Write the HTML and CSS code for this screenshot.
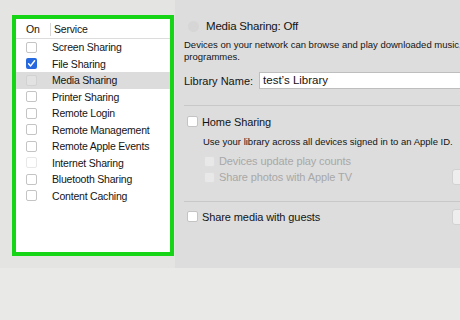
FILE: index.html
```html
<!DOCTYPE html>
<html>
	<head>
		<meta charset="utf-8" />
		<link rel="stylesheet" href="styles.css">
	</head>
	<body>
		<div class="top">
			<div class="left">
				<div class="list">
					<div class="list-head">
						<span class="col-on">On</span>
						<span class="col-service">Service</span>
					</div>
					<div class="row"><span class="box"></span><span>Screen Sharing</span></div>
					<div class="row"><span class="box checked"><svg width="11" height="11" viewBox="0 0 11 11"><path d="M2.6 5.8 L4.6 7.9 L8.6 2.8" fill="none" stroke="#fff" stroke-width="1.5" stroke-linecap="round" stroke-linejoin="round"/></svg></span><span>File Sharing</span></div>
					<div class="row selected"><span class="box faint"></span><span>Media Sharing</span></div>
					<div class="row"><span class="box"></span><span>Printer Sharing</span></div>
					<div class="row"><span class="box"></span><span>Remote Login</span></div>
					<div class="row"><span class="box"></span><span>Remote Management</span></div>
					<div class="row"><span class="box"></span><span>Remote Apple Events</span></div>
					<div class="row"><span class="box faint"></span><span>Internet Sharing</span></div>
					<div class="row"><span class="box"></span><span>Bluetooth Sharing</span></div>
					<div class="row"><span class="box"></span><span>Content Caching</span></div>
				</div>
			</div>
			<div class="panel">
				<div class="title"><span class="radio"></span><span>Media Sharing: Off</span></div>
				<div class="desc">Devices on your network can browse and play downloaded music, films and TV programmes.</div>
				<div class="lib">
					<span>Library Name:</span>
					<span class="input">test’s Library</span>
				</div>
				<div class="section">
					<div class="check-line"><span class="box"></span><span>Home Sharing</span></div>
					<div class="note">Use your library across all devices signed in to an Apple ID.</div>
					<div class="check-line sub disabled"><span class="box"></span><span>Devices update play counts</span></div>
					<div class="check-line sub disabled"><span class="box"></span><span>Share photos with Apple TV</span><span class="side-btn"></span></div>
				</div>
				<div class="section guests">
					<div class="check-line"><span class="box"></span><span>Share media with guests</span><span class="side-btn"></span></div>
				</div>
			</div>
		</div>
		<div class="bottom"></div>
	</body>
</html>
```

FILE: styles.css
```css
html, body {
	margin: 0;
	padding: 0;
}
body {
	width: 460px;
	height: 320px;
	overflow: hidden;
	background-color: rgb(233, 234, 231);
	font-family: 'Liberation Sans', Arial, sans-serif;
	color: rgb(20, 20, 20);
}
.top {
	display: flex;
	height: 268px;
}
.left {
	width: 163px;
	padding: 15px 0 0 12px;
	background-color: rgb(228, 228, 226);
}
.list {
	box-sizing: border-box;
	width: 162px;
	height: 241px;
	border: 4px solid rgb(22, 212, 22);
	background-color: white;
	padding-top: 1px;
	font-size: 10.5px;
	letter-spacing: -0.2px;
}
.list-head {
	display: flex;
	align-items: center;
	height: 18px;
	border-bottom: 1px solid rgb(220, 220, 220);
}
.col-on {
	width: 24px;
	padding-left: 10px;
	border-right: 1px solid rgb(215, 215, 215);
	line-height: 13px;
}
.col-service {
	padding-left: 3px;
}
.row {
	display: flex;
	align-items: center;
	height: 16.5px;
	padding-left: 10px;
	gap: 15px;
}
.row.selected {
	background-color: rgb(220, 220, 220);
}
.box {
	box-sizing: border-box;
	display: inline-block;
	width: 11px;
	height: 11px;
	border: 1px solid rgb(196, 196, 196);
	border-radius: 2px;
	background-color: white;
	flex: none;
}
.box.checked {
	border: none;
	background-color: rgb(38, 104, 222);
}
.box.checked svg {
	display: block;
}
.box.faint {
	border-color: rgb(232, 232, 232);
	background-color: transparent;
}
.row.selected .box.faint {
	border-color: rgb(210, 210, 210);
	background-color: rgb(226, 226, 226);
}
.panel {
	flex: 1;
	background-color: rgb(221, 221, 221);
	padding-left: 9px;
	overflow: hidden;
	white-space: nowrap;
}
.title {
	display: flex;
	align-items: center;
	gap: 7px;
	height: 14px;
	margin-top: 19px;
	padding-left: 4px;
	font-size: 11.5px;
	letter-spacing: -0.2px;
}
.radio {
	width: 11px;
	height: 11px;
	border-radius: 50%;
	background-color: rgb(214, 214, 214);
}
.desc {
	margin-top: 6px;
	width: 340px;
	white-space: normal;
	font-size: 9.5px;
	line-height: 12px;
}
.lib {
	display: flex;
	align-items: center;
	gap: 6px;
	margin-top: 9px;
	font-size: 11px;
}
.input {
	box-sizing: border-box;
	flex: none;
	width: 230px;
	height: 17px;
	line-height: 15px;
	padding-left: 3px;
	font-size: 11.5px;
	border: 1px solid rgb(190, 190, 190);
	background-color: white;
}
.section {
	margin-top: 16px;
	border-top: 1px solid rgb(200, 200, 200);
	padding-top: 9px;
	padding-bottom: 16px;
}
.check-line {
	display: flex;
	align-items: center;
	gap: 4px;
	height: 13px;
	padding-left: 3px;
	font-size: 11px;
	letter-spacing: -0.1px;
}
.note {
	padding-left: 19px;
	margin-top: 7px;
	margin-bottom: 5px;
	font-size: 9.5px;
	line-height: 13px;
}
.check-line.sub {
	padding-left: 20px;
	height: 16px;
}
.check-line.disabled {
	color: rgb(168, 168, 168);
}
.check-line.disabled .box {
	border-color: rgb(222, 222, 222);
	background-color: rgb(232, 232, 232);
}
.side-btn {
	margin-left: auto;
	width: 12px;
	height: 14px;
	border-radius: 3px;
	background-color: rgb(238, 238, 238);
	border: 1px solid rgb(210, 210, 210);
	position: relative;
	left: 6px;
}
.guests {
	margin-top: 0;
	padding-top: 8px;
}
.bottom {
	height: 52px;
}
```
